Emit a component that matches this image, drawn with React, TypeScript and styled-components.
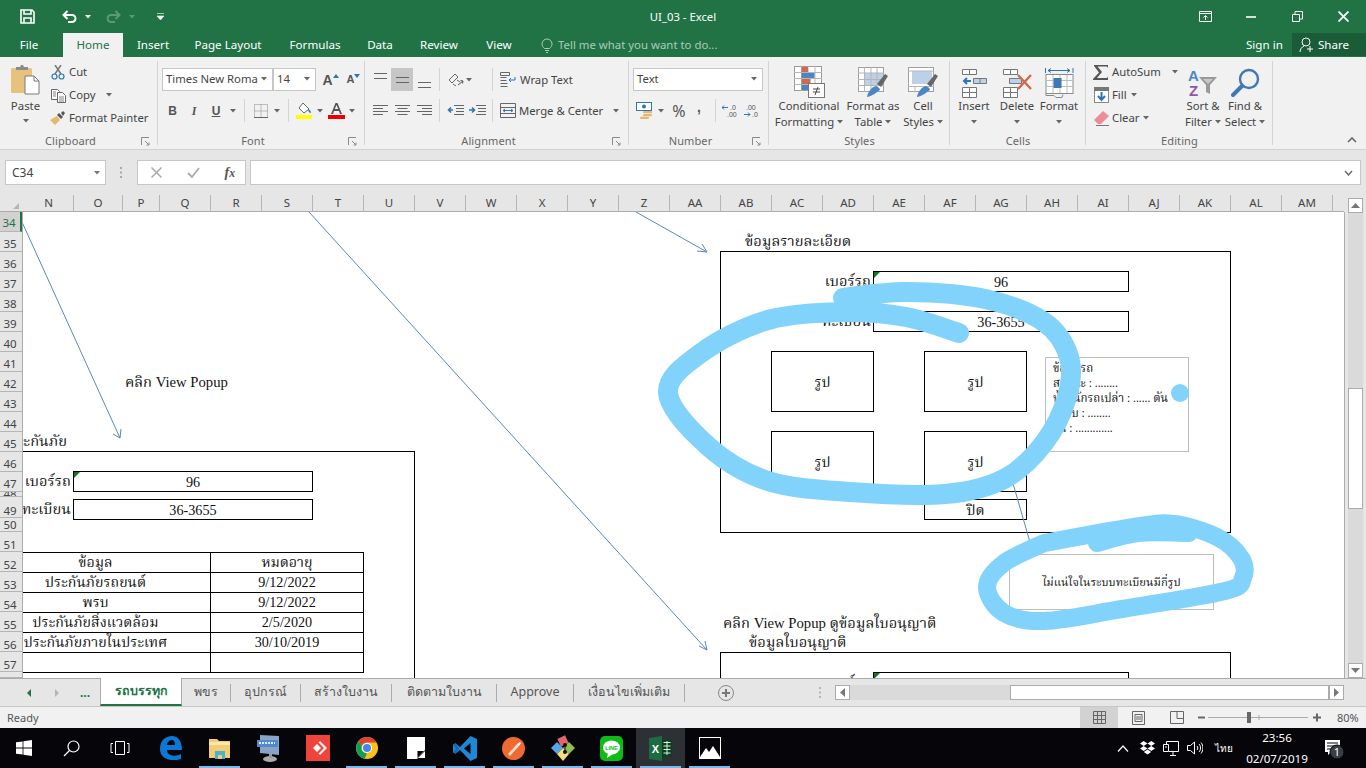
import React from "react";
import styled, { createGlobalStyle } from "styled-components";

const UI = '"Noto Sans", "Open Sans", Arial, sans-serif';
const SERIF = '"Liberation Serif", "Noto Serif Thai", "Noto Sans Thai", "Noto Sans", "DejaVu Serif", serif';

const Global = createGlobalStyle`
  html, body { margin: 0; padding: 0; width: 1366px; height: 768px; overflow: hidden; background: #fff; }
  #root { width: 1366px; height: 768px; }
  * { box-sizing: border-box; }
  svg { display: block; flex: none; }
`;

const Window = styled.div`
  width: 1366px; height: 768px; display: flex; flex-direction: column; overflow: hidden;
  font: 11.3px/16px ${UI}; color: #444;
`;

/* ---------- title bar ---------- */
const TitleBar = styled.div`
  height: 33px; background: #217346; color: #fff; display: grid;
  grid-template-columns: 1fr auto 1fr; align-items: center; flex: none;
`;
const Qat = styled.div`display: flex; align-items: center; padding-left: 19px;`;
const QatSlot = styled.div<{ $w: number }>`width: ${p => p.$w}px; display: flex; justify-content: center;`;
const TitleText = styled.div`font-size: 11.3px; color: #fff;`;
const WinButtons = styled.div`display: flex; justify-content: flex-end; align-items: center;`;
const WinButton = styled.div`width: 46px; display: flex; justify-content: center;`;

/* ---------- tab row ---------- */
const TabRow = styled.div`height: 24px; background: #217346; display: flex; align-items: stretch; color: #fff; flex: none;`;
const MenuTab = styled.div<{ $w: number; $active?: boolean; $pr?: number }>`
  width: ${p => p.$w}px; display: flex; justify-content: center; align-items: center; font-size: 11.6px;
  padding-right: ${p => p.$pr ?? 0}px;
  background: ${p => (p.$active ? "#f1f1f1" : "transparent")};
  color: ${p => (p.$active ? "#217346" : "#fff")};
`;
const TellMe = styled.div`
  display: flex; align-items: center; gap: 5px; margin-left: 18px; color: #a8cdb8; font-size: 11.4px; flex: 1;
`;
const SignIn = styled.div`width: 46px; text-align: left; font-size: 11.6px; line-height: 24px;`;
const Share = styled.div`
  width: 74px; height: 23px; background: #1a5c38; display: flex; align-items: center; gap: 3px;
  padding-left: 7px; font-size: 11.6px;
`;

/* ---------- ribbon ---------- */
const Ribbon = styled.div`
  height: 93px; background: #f1f1f1; border-bottom: 1px solid #d2d2d2; display: flex; flex: none;
`;
const Group = styled.div<{ $w: number }>`
  width: ${p => p.$w}px; height: 92px; padding-top: 4px; flex: none;
`;
const GroupInner = styled.div`
  height: 84px; border-right: 1px solid #d4d4d4; display: flex; flex-direction: column;
`;
const GroupBody = styled.div<{ $pl?: number; $pt?: number }>`
  height: 72px; flex: none; display: flex;
  padding-left: ${p => p.$pl ?? 0}px; padding-top: ${p => p.$pt ?? 0}px;
`;
const GroupFoot = styled.div<{ $launch?: boolean }>`
  height: 16px; flex: none; display: grid; align-items: center; margin-right: -1px;
  grid-template-columns: ${p => (p.$launch ? "1fr auto 1fr 17px" : "1fr auto 1fr")};
  color: #666; font-size: 11px; letter-spacing: .1px;
`;
const PasteCol = styled.div`
  width: 33px; margin-left: 9px; margin-right: 8px; display: flex; flex-direction: column; align-items: center;
  padding-top: 3px; font-size: 11.4px;
`;
const PasteLabel = styled.div`margin-top: 3px;`;
const PasteCaret = styled.div`margin-top: 5px;`;
const Stack = styled.div<{ $w?: number }>`display: flex; flex-direction: column; ${p => (p.$w ? `width:${p.$w}px;` : "")}`;
const StackRow = styled.div`height: 23px; display: flex; align-items: center; gap: 2px; white-space: nowrap; padding-bottom: 1px;`;
const StackIcon = styled.div`width: 16px; display: flex; justify-content: center; margin-right: 1px;`;
const CaretGap = styled.div<{ $ml: number }>`margin-left: ${p => p.$ml}px; display: flex;`;
const Col = styled.div<{ $w?: number }>`
  display: flex; flex-direction: column; gap: 8px; ${p => (p.$w ? `width:${p.$w}px;` : "")}
`;
const Row = styled.div<{ $gap?: number; $ml?: number }>`
  height: 23px; display: flex; align-items: center; gap: ${p => p.$gap ?? 0}px; white-space: nowrap; margin-left: ${p => p.$ml ?? 0}px;
`;
const Combo = styled.div<{ $w: number }>`
  width: ${p => p.$w}px; height: 23px; background: #fff; border: 1px solid #c6c6c6; display: flex; align-items: center;
  justify-content: space-between; padding: 0 5px 1px 3px; color: #444; white-space: nowrap; overflow: hidden; flex: none;
`;
const IconBtn = styled.div<{ $w: number; $on?: boolean }>`
  width: ${p => p.$w}px; height: 23px; display: flex; align-items: center; justify-content: center; flex: none;
  background: ${p => (p.$on ? "#c6c6c6" : "transparent")};
`;
const GlyphBtn = styled(IconBtn)<{ $size?: number; $serif?: boolean; $line?: boolean; $bump?: number }>`
  font: ${p => (p.$serif ? "italic 700" : "700")} ${p => p.$size ?? 12}px/16px ${p => (p.$serif ? '"Liberation Serif"' : '"Liberation Sans"')}, serif;
  color: #555; ${p => (p.$line ? "text-decoration: underline;" : "")}
  padding-bottom: ${p => p.$bump ?? 0}px;
`;
const PctBtn = styled(IconBtn)`font: 400 16px/16px ${UI}; color: #555;`;
const VSep = styled.div<{ $l?: number; $r?: number }>`
  width: 1px; height: 23px; background: #d4d4d4; flex: none;
  margin: 0 ${p => p.$r ?? 5}px 0 ${p => p.$l ?? 5}px;
`;
const VSepTall = styled.div<{ $ml: number; $mr: number }>`
  width: 1px; height: 54px; margin: 0 ${p => p.$mr}px 0 ${p => p.$ml}px; display: flex; flex-direction: column; justify-content: space-between; flex: none;
  &::before, &::after { content: ""; display: block; height: 23px; background: #d4d4d4; }
`;
const Large = styled.div<{ $w: number }>`
  width: ${p => p.$w}px; display: flex; flex-direction: column; align-items: center; white-space: nowrap; flex: none;
`;
const LargeIcon = styled.div`height: 37px; display: flex; align-items: flex-end; justify-content: center;`;
const LargeText = styled.div`height: 16px; display: flex; align-items: center; gap: 3px; line-height: 16px;`;
const FontAGlyph = styled.span<{ $s: number }>`font: 700 ${p => p.$s}px/1 "Liberation Sans", sans-serif; color: #555;`;
const Spacer = styled.div`flex: 1; display: flex; justify-content: flex-end; align-items: flex-end; padding: 0 9px 6px 0;`;

/* ---------- formula bar ---------- */
const FormulaBar = styled.div`
  height: 45px; background: #e6e6e6; display: flex; align-items: flex-start; padding: 10px 5px 0 5px; flex: none;
`;
const NameBox = styled.div`
  width: 101px; height: 25px; background: #fff; border: 1px solid #c6c6c6; display: flex; align-items: center;
  justify-content: space-between; padding: 0 5px 0 6px; font-size: 12px;
`;
const Grip = styled.div`width: 31px; height: 25px; display: flex; align-items: center; justify-content: center;`;
const FxBox = styled.div`
  width: 109px; height: 25px; background: #fff; border: 1px solid #c6c6c6; display: flex; align-items: center;
  justify-content: space-between; padding: 0 10px 0 13px; margin-right: 4px;
`;
const FxText = styled.span`font: italic 700 14px/1 "Liberation Serif", serif; color: #555;`;
const FormulaInput = styled.div`
  flex: 1; height: 25px; background: #fff; border: 1px solid #c6c6c6; display: flex; align-items: center; justify-content: flex-end; padding-right: 7px;
`;

/* ---------- column header ---------- */
const ColRow = styled.div`height: 17px; background: #e6e6e6; display: flex; flex: none;`;
const Corner = styled.div`width: 24px; display: flex; align-items: flex-end; justify-content: flex-end; padding: 0 5px 2px 0; border-bottom: 1px solid #ababab; flex: none;`;
const ColCell = styled.div<{ $w: number }>`
  width: ${p => p.$w}px; height: 17px; border-right: 1px solid #b5b5b5; border-bottom: 1px solid #ababab;
  font: 11.5px/16px ${UI}; color: #444; text-align: center; flex: none;
`;
const ColRest = styled.div`width: 11px; height: 17px; border-bottom: 1px solid #ababab; flex: none;`;

/* ---------- sheet ---------- */
const SheetArea = styled.div`height: 466px; display: flex; flex: none; background: #e6e6e6;`;
const RowHeaders = styled.div`width: 23px; flex: none; display: flex; flex-direction: column; border-right: 1px solid #ababab;`;
const RowHead = styled.div<{ $h: number; $lh: number; $active?: boolean }>`
  height: ${p => p.$h}px; flex: none; overflow: hidden; text-align: center; border-bottom: 1px solid #b5b5b5;
  font: 11.5px/${p => p.$lh}px ${UI}; padding-right: 2px;
  background: ${p => (p.$active ? "#d2d2d2" : "#e6e6e6")};
  color: ${p => (p.$active ? "#217346" : "#444")};
  border-right: ${p => (p.$active ? "2px solid #217346" : "0")};
`;
const Canvas = styled.div`
  width: 1321px; height: 466px; position: relative; overflow: hidden; background: #fff; flex: none;
  font: 14.7px/20px ${SERIF}; color: #111; box-shadow: 1px 0 0 #ababab;
`;
const Label = styled.div<{ $x: number; $y: number; $w?: number; $right?: boolean }>`
  position: absolute; left: ${p => p.$x - 23}px; top: ${p => p.$y - 212}px; white-space: nowrap; height: 20px;
  ${p => (p.$w ? `width:${p.$w}px;` : "")} ${p => (p.$right ? "text-align:right;" : "")}
`;
const Boxed = styled.div<{ $x: number; $y: number; $w: number; $h: number; $gray?: boolean; $flag?: boolean }>`
  position: absolute; left: ${p => p.$x - 23}px; top: ${p => p.$y - 212}px; width: ${p => p.$w}px; height: ${p => p.$h}px;
  border: 1px solid ${p => (p.$gray ? "#bdbdbd" : "#000")}; background: ${p => (p.$gray ? "#fff" : "transparent")};
  display: flex; align-items: center; justify-content: center; line-height: 18px; font-size: 14.2px;
  &::before { content: ""; display: ${p => (p.$flag ? "block" : "none")}; position: absolute; left: 0; top: 0;
    border-style: solid; border-width: 6px 6px 0 0; border-color: #0b7a1a transparent transparent transparent; }
`;
const InfoText = styled.div`
  position: absolute; left: 7px; top: 3px; font-size: 11.5px; line-height: 15px; white-space: nowrap;
`;
const NoteText = styled.div`font-size: 11.3px; line-height: 14px; white-space: nowrap;`;
const SheetTable = styled.div`
  position: absolute; left: -43px; top: 340px; display: grid; grid-template-columns: 230px 153px; grid-auto-rows: 20px;
  border-left: 1px solid #000; border-top: 1px solid #000; width: 384px; font-size: 14.2px;
`;
const TCell = styled.div`
  border-right: 1px solid #000; border-bottom: 1px solid #000; display: flex; align-items: center; justify-content: center; line-height: 19px;
`;
const Overlay = styled.svg`position: absolute; left: 0; top: 0; pointer-events: none;`;
const VScroll = styled.div`
  flex: 1; padding: 0 3px 0 4px; margin-top: -14px; height: 480px; display: flex; flex-direction: column;
`;
const Track = styled.div`flex: 1; background: #dadada; display: flex; flex-direction: column; width: 15px;`;
const ScrollBtn = styled.div`
  height: 15px; width: 15px; background: #fff; border: 1px solid #ababab; display: flex; align-items: center; justify-content: center; flex: none;
`;
const VThumb = styled.div`width: 15px; height: 121px; background: #fff; border: 1px solid #ababab; margin-top: 175px;`;

/* ---------- sheet tabs ---------- */
const TabsBar = styled.div`
  height: 29px; background: #e6e6e6; border-top: 1px solid #ababab; border-bottom: 1px solid #c6c6c6; display: flex; align-items: center; flex: none;
`;
const Nav = styled.div<{ $w: number }>`width: ${p => p.$w}px; display: flex; justify-content: center; align-items: center; color: #217346; font-weight: 700; font-size: 12px; flex: none;`;
const SheetTab = styled.div<{ $w: number; $active?: boolean }>`
  width: ${p => p.$w}px; height: 28px; margin-top: -1px; display: flex; align-items: center; justify-content: center; flex: none;
  font: ${p => (p.$active ? 700 : 400)} 12.5px/16px ${UI};
  color: ${p => (p.$active ? "#217346" : "#555")};
  background: ${p => (p.$active ? "#fff" : "transparent")};
  border-left: ${p => (p.$active ? "1px solid #ababab" : "0")};
  border-right: ${p => (p.$active ? "1px solid #ababab" : "0")};
  border-bottom: ${p => (p.$active ? "2px solid #217346" : "0")};
`;
const TabDiv = styled.div`width: 1px; height: 18px; background: #ababab; flex: none;`;
const AddTab = styled.div`margin-left: 33px; margin-right: 85px; display: flex;`;
const HScroll = styled.div`display: flex; align-items: center; height: 15px; margin-left: 13px; width: 510px;`;
const HTrack = styled.div`width: 160px; height: 15px; background: #dadada;`;
const HThumb = styled.div`width: 319px; height: 15px; background: #fff; border: 1px solid #ababab;`;

/* ---------- status bar ---------- */
const StatusBar = styled.div`
  height: 21px; background: #f1f1f1; display: flex; align-items: center; padding-left: 7px; flex: none; font-size: 11px; color: #555;
`;
const StatusGrow = styled.div`flex: 1;`;
const ViewBtn = styled.div<{ $on?: boolean }>`
  width: 38px; height: 21px; display: flex; align-items: center; justify-content: center; margin-right: 1px;
  background: ${p => (p.$on ? "#d2d2d2" : "transparent")};
`;
const Zoom = styled.div`width: 130px; display: flex; align-items: center; margin-left: 1px;`;
const ZoomPct = styled.div`width: 29px; margin-left: 9px; font-size: 11px;`;

/* ---------- taskbar ---------- */
const Taskbar = styled.div`height: 40px; background: #05050a; display: flex; align-items: stretch; flex: none; color: #fff;`;
const TaskItem = styled.div<{ $on?: boolean; $run?: boolean; $w?: number }>`
  width: ${p => p.$w ?? 49}px; flex: none; display: flex; align-items: center; justify-content: center; position: relative;
  background: ${p => (p.$on ? "#2d3034" : "transparent")};
  &::after { content: ""; position: absolute; left: 4px; right: 4px; bottom: 0; height: 2px; background: #76b9ed;
    display: ${p => (p.$run || p.$on ? "block" : "none")}; }
`;
const TaskGrow = styled.div`flex: 1;`;
const Tray = styled.div<{ $w: number; $pr?: number }>`
  width: ${p => p.$w}px; flex: none; display: flex; align-items: center; justify-content: center; padding-right: ${p => p.$pr ?? 0}px;
`;
const LangText = styled.div`font: 10px/1 "Noto Sans", sans-serif;`;
const Clock = styled.div`width: 72px; text-align: center; font-size: 11.6px; line-height: 21px; flex: none; display: flex; flex-direction: column; justify-content: center;`;

/* ---------- icons ---------- */
const Caret = ({ c = "#666" }: { c?: string }) => (
  <svg width="6" height="4" viewBox="0 0 6 4"><path d="M0 0h6L3 3.500z" fill={c} /></svg>
);
const Launch = () => (
  <svg width="9" height="9" viewBox="0 0 9 9" fill="none" stroke="#8a8a8a"><path d="M.5 8V.5H8M4 4l4 4M8 5.500V8H5.500" /></svg>
);
const PasteIcon = () => (
  <svg width="31" height="31" viewBox="0 0 31 31">
    <rect x="1" y="4" width="21" height="25" rx="1.500" fill="#e7c27e" />
    <path d="M6 6V3h4l1-2h2l1 2h4v3z" fill="#8b8b8b" />
    <path d="M15 12h9l5 5v13H15z" fill="#fff" stroke="#7a7a7a" /><path d="M24 12v5h5" fill="none" stroke="#7a7a7a" />
  </svg>
);
const CutIcon = () => (
  <svg width="15" height="15" viewBox="0 0 15 15" fill="none">
    <path d="M4 9L10 0M10 9L4 0" stroke="#777" strokeWidth="1.500" />
    <circle cx="3.500" cy="11.500" r="2.500" stroke="#2e75b6" strokeWidth="1.200" /><circle cx="10.500" cy="11.500" r="2.500" stroke="#2e75b6" strokeWidth="1.200" />
  </svg>
);
const CopyIcon = () => (
  <svg width="15" height="15" viewBox="0 0 15 15" fill="#fff" stroke="#666">
    <path d="M.5 1.500h6l2 2v8h-8z" /><path d="M6.500 4.500h5l3 3v7h-8z" />
    <path d="M8 9h5M8 11h5M8 13h5M2 4h3M2 6h3M2 8h3" strokeWidth=".8" />
  </svg>
);
const BrushIcon = () => (
  <svg width="16" height="14" viewBox="0 0 16 14">
    <path d="M9 2l4 4-2 2-4-4z" fill="#555" /><path d="M11 2l2-2 2 2-2 3z" fill="#555" />
    <path d="M7 5l3 4-5 5-5-5z" fill="#e5b76f" />
  </svg>
);
const Up = () => <svg width="6" height="4" viewBox="0 0 6 4" style={{ marginBottom: 8 }}><path d="M0 4h6L3 0z" fill="#2e75b6" /></svg>;
const Dn = () => <svg width="6" height="4" viewBox="0 0 6 4" style={{ marginBottom: 8 }}><path d="M0 0h6L3 4z" fill="#2e75b6" /></svg>;
const BorderIcon = () => (
  <svg width="14" height="14" viewBox="0 0 14 14" fill="none" stroke="#888" strokeDasharray="1 1"><path d="M.5.5h13v13H.5zM7 .5v13M.5 7h13" /><path d="M0 13.500h14" stroke="#666" strokeDasharray="none" /></svg>
);
const FillIcon = () => (
  <svg width="17" height="17" viewBox="0 0 17 17">
    <path d="M7 1l6 6-5 4-5-5z" fill="#fff" stroke="#666" /><path d="M12 7c2 1 3 2 3 4-1 0-3-1-3-4z" fill="#2e75b6" />
    <rect x="0" y="13" width="16" height="4" fill="#ffff00" />
  </svg>
);
const ColorA = () => (
  <svg width="17" height="16" viewBox="0 0 17 16">
    <path d="M3 11L7.500 0h2L14 11h-2l-1-3H6l-1 3zM6.800 6h3.400L8.500 2z" fill="#555" /><rect y="12" width="17" height="4" fill="#e00" />
  </svg>
);
const linePaths = {
  t: "M1 1.500h13M1 6.500h13",
  m: "M1 5.500h13M1 10.500h13",
  b: "M1 10.500h13M1 15.500h13",
  l: "M0 .5h15M0 3.500h10M0 6.500h15M0 9.500h10",
  c: "M0 .5h15M2.500 3.500h10M0 6.500h15M2.500 9.500h10",
  r: "M0 .5h15M5 3.500h10M0 6.500h15M5 9.500h10",
};
const Lines = ({ kind }: { kind: keyof typeof linePaths }) => (
  <svg width="15" height={"tmb".includes(kind) ? 16 : 11} viewBox={`0 0 15 ${"tmb".includes(kind) ? 16 : 11}`} stroke="#666"><path d={linePaths[kind]} /></svg>
);
const Orient = () => (
  <svg width="17" height="15" viewBox="0 0 17 15" fill="none" stroke="#666">
    <path d="M1 8l6-6 3 3-6 6zM5 12l3 2M9 8l3 2" /><path d="M10 13l5-4M12.500 8.500l2.500.5-.5 2.500" stroke="#555" />
  </svg>
);
const Indent = ({ out }: { out?: boolean }) => (
  <svg width="17" height="11" viewBox="0 0 17 11">
    <path d="M7 .5h10M9 3.500h8M9 6.500h8M7 9.500h10" stroke="#666" fill="none" />
    <path d={out ? "M6 5H2M4 2.500L1.500 5 4 7.500" : "M0 5h5M3 2.500L5.500 5 3 7.500"} stroke="#2e75b6" strokeWidth="1.600" fill="none" />
  </svg>
);
const WrapIcon = () => (
  <svg width="17" height="15" viewBox="0 0 17 15" fill="none" stroke="#666">
    <path d="M.5.5h9v3h-9zM.5 5.500h6M.5 8.500h6M.5 11.500h7M.5 14.500h7" /><path d="M9 8h6V5M11 6l-2 2 2 2" stroke="#2e75b6" />
  </svg>
);
const MergeIcon = () => (
  <svg width="16" height="15" viewBox="0 0 16 15" fill="#fff" stroke="#666">
    <path d="M.5.5h15v14H.5zM.5 4.500h15M.5 10.500h15" fill="none" /><path d="M3 7.500h10M3 7.500l2-1.500M3 7.500l2 1.500M13 7.500l-2-1.500M13 7.500l-2 1.500" stroke="#2e75b6" fill="none" />
  </svg>
);
const CurrencyIcon = () => (
  <svg width="17" height="17" viewBox="0 0 17 17">
    <rect x=".5" y=".5" width="15" height="8" fill="#fff" stroke="#2e75b6" /><circle cx="8" cy="4.500" r="2" fill="#2e75b6" />
    <rect x="7" y="9" width="9" height="2.200" rx="1" fill="#e5b76f" /><rect x="7" y="12" width="9" height="2.200" rx="1" fill="#e5b76f" /><rect x="4" y="14.800" width="9" height="2.200" rx="1" fill="#e5b76f" />
  </svg>
);
const DecIcon = ({ inc }: { inc?: boolean }) => (
  <svg width="16" height="14" viewBox="0 0 16 14" fontFamily="Liberation Sans" fontSize="7" fill="#555">
    <text x={inc ? 3 : 8} y="6">{inc ? ".00" : ".0"}</text>
    <text x={inc ? 9 : 5} y="13">{inc ? ".0" : ".00"}</text>
    {inc
      ? <path d="M1 10.500h6M5 8.500l2 2-2 2" stroke="#2e75b6" fill="none" />
      : <path d="M0 3.500h6M2 1.500l-2 2 2 2" stroke="#2e75b6" fill="none" />}
  </svg>
);
const CondIcon = () => (
  <svg width="31" height="32" viewBox="0 0 31 32">
    <g fill="#fff" stroke="#9a9a9a"><rect x=".5" y=".5" width="27" height="24" /></g>
    <path d="M7.500 0v25M14 0v25M21 0v25M0 6.500h28M0 12.500h28M0 18.500h28" stroke="#b5b5b5" />
    <rect x="7.500" y="1" width="6.500" height="5" fill="#d2694a" /><rect x="7.500" y="7" width="13" height="5" fill="#4a86c4" />
    <rect x="7.500" y="13" width="9" height="5" fill="#d2694a" /><rect x="7.500" y="19" width="6.500" height="5" fill="#4a86c4" />
    <rect x="14.500" y="17.500" width="16" height="14" fill="#fff" stroke="#777" />
    <path d="M19 23h7M19 26h7M24 21l-3 8" stroke="#444" />
  </svg>
);
const TableIcon = ({ full }: { full?: boolean }) => (
  <svg width="31" height="31" viewBox="0 0 31 31">
    <rect x=".5" y=".5" width="25" height="24" fill="#fff" stroke="#a0a0a0" />
    {full
      ? <rect x="4" y="4" width="20" height="13" fill="#bdd0e8" />
      : <rect x="6" y="6" width="19" height="13" fill="#bdd0e8" />}
    {!full && <path d="M6.500 0v25M13 0v25M19 0v25M0 6h26M0 12.500h26M0 18.500h26" stroke="#b5b5b5" />}
    {full && <path d="M0 4h26M0 19.500h26M7 19v6M18 19v6" stroke="#b5b5b5" />}
    <path d="M19 17l8-10 3 2-7 11z" fill="#666" />
    <path d="M9 30c1-6 5-10 9-11 3 1 4 3 4 4-3 2-7 6-13 7z" fill="#4a86c4" />
  </svg>
);
const InsertIcon = () => (
  <svg width="27" height="29" viewBox="0 0 27 29" fill="#fff" stroke="#777">
    <path d="M1.500.5h14v5h-14zM8.500.5v5" />
    <path d="M12.500 9.500h13v5h-13zM19 9.500v5" fill="#bcd2e8" />
    <path d="M1.500 18.500h14v10h-14zM1.500 23.500h14M8.500 18.500v10" />
    <path d="M10 12H3M6 9l-3 3 3 3" fill="none" stroke="#2e75b6" strokeWidth="2" />
  </svg>
);
const DeleteIcon = () => (
  <svg width="31" height="29" viewBox="0 0 31 29" fill="#fff" stroke="#777">
    <path d="M1.500.5h14v5h-14zM8.500.5v5" />
    <path d="M7.500 9.500h12v5h-12z" fill="#bcd2e8" />
    <path d="M1.500 18.500h14v10h-14zM1.500 23.500h14M8.500 18.500v10" />
    <path d="M16 6l13 14M29 6L16 20" stroke="#d2694a" strokeWidth="2.400" fill="none" />
  </svg>
);
const FormatIcon = () => (
  <svg width="29" height="31" viewBox="0 0 29 31" fill="none">
    <path d="M.5 1v5M28 1v5M3 3.500h22M6 1.500L3 3.500l3 2M22 1.500l3 2-3 2" stroke="#2e75b6" />
    <rect x="1" y="7.500" width="27" height="19" fill="#fff" stroke="#8a8a8a" />
    <path d="M8 8v18M15 8v18M22 8v18M1 13.500h27M1 19.500h27" stroke="#bdbdbd" />
    <rect x="8.500" y="11" width="8" height="10" fill="#3f78b5" />
    <path d="M1 27v1.500h8l2 2h6l1-3" stroke="#8a8a8a" />
  </svg>
);
const Sigma = () => <svg width="16" height="15" viewBox="0 0 16 15"><path d="M1 0h14v3l-1-1.500H4.500L9 7l-5 6h10l1-1.500V15H0v-1l6-6.500L1 1z" fill="#555" /></svg>;
const FillDown = () => (
  <svg width="15" height="16" viewBox="0 0 15 16">
    <rect x=".5" y=".5" width="14" height="15" fill="#fff" stroke="#888" /><rect y="0" width="15" height="4" fill="#777" />
    <path d="M7.500 5v8M4 9l3.500 4L11 9" stroke="#2e75b6" strokeWidth="2" fill="none" />
  </svg>
);
const Eraser = () => (
  <svg width="15" height="15" viewBox="0 0 15 15"><path d="M9 0l6 5-8 8H4L0 9z" fill="#ec8d94" /><path d="M2 14.500h13" stroke="#777" /></svg>
);
const SortIcon = () => (
  <svg width="30" height="30" viewBox="0 0 30 30">
    <text x="0" y="13" fontFamily="Liberation Sans" fontWeight="700" fontSize="15" fill="#4a86c4">A</text>
    <text x="1" y="28" fontFamily="Liberation Sans" fontWeight="700" fontSize="15" fill="#8e56a8">Z</text>
    <path d="M11 9h18l-7 8v9l-4-2v-7z" fill="#999" /><path d="M15 11h10l-5 5z" fill="#c8c8c8" />
  </svg>
);
const FindIcon = () => (
  <svg width="29" height="30" viewBox="0 0 29 30" fill="none">
    <circle cx="18" cy="11" r="9" stroke="#3f78b5" strokeWidth="2.400" />
    <path d="M11 18L2 27" stroke="#3f78b5" strokeWidth="4" strokeLinecap="round" />
  </svg>
);
const Windows = () => (
  <svg width="16" height="16" viewBox="0 0 16 16" fill="#fff"><path d="M0 2.300L6.600 1.400V7.600H0zM7.400 1.300L16 0V7.600H7.400zM0 8.400H6.600V14.600L0 13.700zM7.400 8.400H16V16L7.400 14.800z" /></svg>
);
const SearchI = () => (
  <svg width="17" height="17" viewBox="0 0 17 17" fill="none" stroke="#fff" strokeWidth="1.200"><circle cx="10.500" cy="6.500" r="5.500" /><path d="M6.500 10.500L1 16" /></svg>
);
const TaskView = () => (
  <svg width="20" height="16" viewBox="0 0 20 16" fill="none" stroke="#fff"><path d="M5.500 1.500h9v13h-9zM3 3.500H1v9h2M17 3.500h2v9h-2" /></svg>
);
const Edge = () => (
  <svg width="22" height="24" viewBox="0 0 22 24">
    <path d="M0 13C0 5 5 0 12 0c6 0 10 5 10 14H7c0 6 8 7 14 4v5c-8 3-21 1-21-10zm7-4h8c0-3-1-5-3-5S7 6 7 9z" fill="#0a78d4" />
  </svg>
);
const Explorer = () => (
  <svg width="22" height="21" viewBox="0 0 22 21">
    <path d="M0 1h8l2 2h11v17H0z" fill="#f3cd72" /><path d="M0 4h21v3H0z" fill="#fbe7ac" />
    <rect x="6" y="13" width="10" height="8" fill="#49b0d8" /><rect x="9" y="17" width="4" height="4" fill="#f3cd72" />
  </svg>
);
const Monitor = () => (
  <svg width="23" height="28" viewBox="0 0 23 28">
    <path d="M3 1l19 1v19L3 19z" fill="#8aa4c8" /><rect x="0" y="6" width="21" height="7" fill="#4f8bd0" />
    <path d="M2 9h16" stroke="#dfeaf8" strokeWidth="2" strokeDasharray="2 1" />
    <ellipse cx="13" cy="25" rx="7" ry="3" fill="#aaa" /><rect x="12" y="20" width="3" height="4" fill="#999" />
  </svg>
);
const AnyDesk = () => (
  <svg width="24" height="26" viewBox="0 0 24 26"><rect width="24" height="26" fill="#ef443b" /><path d="M7 13l4-4 4 4-4 4z" fill="#fff" /><path d="M12.500 7.500l1.500-1.500 7 7-7 7-1.500-1.500 5.500-5.500z" fill="#fff" opacity=".95" /></svg>
);
const Chrome = () => (
  <svg width="22" height="22" viewBox="0 0 22 22">
    <circle cx="11" cy="11" r="11" fill="#fbc117" />
    <path d="M11 0a11 11 0 0 1 9.500 5.500H11a5.500 5.500 0 0 0-5 3L2.200 4.500A11 11 0 0 1 11 0z" fill="#db4437" />
    <path d="M2.200 4.500L6 8.500a5.500 5.500 0 0 0 5 8l-2.500 5.200A11 11 0 0 1 2.200 4.500z" fill="#0f9d58" />
    <circle cx="11" cy="11" r="5" fill="#fff" /><circle cx="11" cy="11" r="4" fill="#4285f4" />
  </svg>
);
const Notes = () => (
  <svg width="18" height="22" viewBox="0 0 18 22"><path d="M0 0h18v13l-8 9H0z" fill="#fff" /><path d="M11 21l7-7v7z" fill="#fff" /><path d="M10.500 14H17l-6.500 7z" fill="#05050a" /></svg>
);
const VsCode = () => (
  <svg width="24" height="25" viewBox="0 0 24 25">
    <path d="M17.500 0L24 3v19l-6.500 3L7 14l-4.500 3.800L0 16.300v-7.600L2.500 7.200 7 11z" fill="#1f88d6" />
    <path d="M17.500 7l-6.500 5.500 6.500 5.500z" fill="#05050a" /><path d="M0 8.700l2.500-1.500 3.500 5.300-3.500 5.300L0 16.300l3-3.800z" fill="#0e6cb5" />
  </svg>
);
const Postman = () => (
  <svg width="23" height="23" viewBox="0 0 23 23">
    <circle cx="11.500" cy="11.500" r="11.500" fill="#ee6a32" /><path d="M6 17l9-10 2 2-9 10z" fill="#ffe3d1" opacity=".95" /><path d="M15 7l3-2 1 1-2 3z" fill="#fff" />
  </svg>
);
const GitIcon = () => (
  <svg width="24" height="26" viewBox="0 0 24 26">
    <path d="M12 0l6 6-6 6-6-6z" fill="#e0676f" transform="rotate(20 12 6)" /><path d="M0 13l6-6 6 6-6 6z" fill="#5aa5e8" />
    <path d="M12 13l6-6 6 6-6 6z" fill="#8cc152" /><path d="M6 19l6-6 6 6-6 7z" fill="#f6dd7a" />
    <circle cx="14" cy="10" r="2" fill="#111" /><circle cx="14" cy="17" r="2" fill="#111" /><path d="M14 10v7" stroke="#111" />
  </svg>
);
const Line = () => (
  <svg width="23" height="25" viewBox="0 0 23 25">
    <rect width="23" height="25" rx="5" fill="#0cbb16" /><ellipse cx="11.500" cy="11.500" rx="8.500" ry="7" fill="#fff" />
    <path d="M8 17l-1 5 6-4z" fill="#fff" />
    <text x="11.500" y="13.500" textAnchor="middle" fontFamily="Liberation Sans" fontWeight="700" fontSize="5.500" fill="#0cbb16">LINE</text>
  </svg>
);
const ExcelIcon = () => (
  <svg width="23" height="25" viewBox="0 0 23 25">
    <path d="M0 2L13 0v25L0 23z" fill="#1d6b40" /><rect x="13" y="4" width="10" height="17" fill="#0d3d22" />
    <path d="M14.500 6.500h7M14.500 10h7M14.500 13.500h7M14.500 17h7M18 5v14" stroke="#d8efe0" fill="none" />
    <text x="6.500" y="16.500" textAnchor="middle" fontFamily="Liberation Sans" fontWeight="700" fontSize="11" fill="#fff">X</text>
  </svg>
);
const Photos = () => (
  <svg width="22" height="22" viewBox="0 0 22 22">
    <rect x=".5" y=".5" width="21" height="21" fill="#05050a" stroke="#fff" /><path d="M1 20l6-9 3 4 4-6 7 11v1H1z" fill="#fff" />
  </svg>
);

/* ---------- data ---------- */
const cols: [string, number][] = [["N", 50], ["O", 49], ["P", 37], ["Q", 51], ["R", 51], ["S", 51], ["T", 51], ["U", 51], ["V", 51], ["W", 51], ["X", 51], ["Y", 51], ["Z", 51], ["AA", 51], ["AB", 51], ["AC", 51], ["AD", 51], ["AE", 51], ["AF", 51], ["AG", 51], ["AH", 51], ["AI", 51], ["AJ", 51], ["AK", 51], ["AL", 51], ["AM", 51]];
const rows: [number, number, number][] = [
  [34, 20, 22],
  ...Array.from({ length: 13 }, (_, i) => [35 + i, 20, 24] as [number, number, number]),
  [48, 5, 3], [49, 21, 28], [50, 14, 14], [51, 20, 26], [52, 20, 26], [53, 20, 26], [54, 20, 26], [55, 20, 26], [56, 20, 26], [57, 20, 26], [58, 6, 26],
];
const table = [
  ["ข้อมูล", "หมดอายุ"],
  ["ประกันภัยรถยนต์", "9/12/2022"],
  ["พรบ", "9/12/2022"],
  ["ประกันภัยสิ่งแวดล้อม", "2/5/2020"],
  ["ประกันภัยภายในประเทศ", "30/10/2019"],
  ["", ""],
];
const sheetTabs: [string, number][] = [["พขร", 49], ["อุปกรณ์", 70], ["สร้างใบงาน", 91], ["ติดตามใบงาน", 105], ["Approve", 77], ["เงื่อนไขเพิ่มเติม", 111]];

type P = [number, number];
const smooth = (pts: P[]) => {
  let d = `M${pts[0][0]} ${pts[0][1]}`;
  for (let i = 0; i < pts.length - 1; i++) {
    const p0 = pts[Math.max(0, i - 1)], p1 = pts[i], p2 = pts[i + 1], p3 = pts[Math.min(pts.length - 1, i + 2)];
    d += `C${p1[0] + (p2[0] - p0[0]) / 6} ${p1[1] + (p2[1] - p0[1]) / 6} ${p2[0] - (p3[0] - p1[0]) / 6} ${p2[1] - (p3[1] - p1[1]) / 6} ${p2[0]} ${p2[1]}`;
  }
  return d;
};
const loopA: P[] = [[843, 298], [906, 292], [985, 299], [1044, 322], [1069, 357], [1067, 397], [1044, 443], [1004, 479], [945, 494], [850, 492], [768, 481], [709, 447], [668, 393], [701, 353], [768, 320], [847, 312], [906, 317], [959, 333]];
const loopB: P[] = [[1044, 543], [1134, 527], [1174, 524], [1217, 537], [1241, 558], [1243, 578], [1225, 591], [1122, 609], [1044, 621], [1004, 613], [987, 587], [1004, 563], [1044, 543]];
const loopC: P[] = [[1097, 543], [1138, 533], [1189, 533]];

const App = () => (
  <Window>
    <Global />
    <TitleBar>
      <Qat>
        <QatSlot $w={16}>
          <svg width="15" height="15" viewBox="0 0 15 15" fill="none" stroke="#fff" strokeWidth="1.600"><path d="M1 1h11l2 2v11H1z" /><path d="M4 1v4h7V1M4 14V9h7v5" /></svg>
        </QatSlot>
        <QatSlot $w={27} />
        <QatSlot $w={14}>
          <svg width="15" height="13" viewBox="0 0 15 13" fill="none" stroke="#fff" strokeWidth="2"><path d="M2 5h8a3.500 3.500 0 0 1 0 7H6M5.500 1L1.500 5l4 4" /></svg>
        </QatSlot>
        <QatSlot $w={24}><Caret c="#fff" /></QatSlot>
        <QatSlot $w={6} />
        <QatSlot $w={14}>
          <svg width="15" height="13" viewBox="0 0 15 13" fill="none" stroke="#5b9a78" strokeWidth="2"><path d="M13 5H5a3.500 3.500 0 0 0 0 7h4M9.500 1l4 4-4 4" /></svg>
        </QatSlot>
        <QatSlot $w={24}><Caret c="#5b9a78" /></QatSlot>
        <QatSlot $w={32}>
          <svg width="7" height="7" viewBox="0 0 7 7"><path d="M0 .5h7M0 3h7L3.500 7z" fill="#fff" stroke="#fff" strokeWidth=".6" /></svg>
        </QatSlot>
      </Qat>
      <TitleText>UI_03 - Excel</TitleText>
      <WinButtons>
        <WinButton>
          <svg width="13" height="11" viewBox="0 0 13 11" fill="none" stroke="#fff"><path d="M.5.5h12v10H.5zM.5 2.500h12M6.500 9V5M4.500 6.500l2-2 2 2" /></svg>
        </WinButton>
        <WinButton><svg width="10" height="2" viewBox="0 0 10 2"><path d="M0 1h10" stroke="#fff" strokeWidth="1.600" /></svg></WinButton>
        <WinButton><svg width="11" height="11" viewBox="0 0 11 11" fill="none" stroke="#fff"><path d="M.5 3.500h7v7h-7zM3 3V.5h7.500V8H8" /></svg></WinButton>
        <WinButton><svg width="11" height="11" viewBox="0 0 11 11" stroke="#fff" strokeWidth="1.800"><path d="M.5.5l10 10M10.500.5l-10 10" /></svg></WinButton>
      </WinButtons>
    </TitleBar>

    <TabRow>
      <MenuTab $w={63} $pr={5}>File</MenuTab>
      <MenuTab $w={60} $active>Home</MenuTab>
      <MenuTab $w={60}>Insert</MenuTab>
      <MenuTab $w={90}>Page Layout</MenuTab>
      <MenuTab $w={84}>Formulas</MenuTab>
      <MenuTab $w={46}>Data</MenuTab>
      <MenuTab $w={72}>Review</MenuTab>
      <MenuTab $w={48}>View</MenuTab>
      <TellMe>
        <svg width="12" height="15" viewBox="0 0 12 15" fill="none" stroke="#a8cdb8"><path d="M3.500 10.500C2 9 1 8 1 6a5 5 0 0 1 10 0c0 2-1 3-2.500 4.500zM4 12.500h4M5 14.500h2" /></svg>
        Tell me what you want to do...
      </TellMe>
      <SignIn>Sign in</SignIn>
      <Share>
        <svg width="16" height="16" viewBox="0 0 16 16" fill="none" stroke="#fff"><circle cx="7" cy="5" r="4" /><path d="M1 15c0-3 2-5 4-6M11 9v6M8 12h6" /></svg>
        Share
      </Share>
    </TabRow>

    <Ribbon>
      <Group $w={158}>
        <GroupInner>
          <GroupBody>
            <PasteCol>
              <PasteIcon />
              <PasteLabel>Paste</PasteLabel>
              <PasteCaret><Caret /></PasteCaret>
            </PasteCol>
            <Stack>
              <StackRow><StackIcon><CutIcon /></StackIcon>Cut</StackRow>
              <StackRow><StackIcon><CopyIcon /></StackIcon>Copy<CaretGap $ml={9}><Caret /></CaretGap></StackRow>
              <StackRow><StackIcon><BrushIcon /></StackIcon>Format Painter</StackRow>
            </Stack>
          </GroupBody>
          <GroupFoot $launch><span /><span>Clipboard</span><span /><Launch /></GroupFoot>
        </GroupInner>
      </Group>

      <Group $w={207}>
        <GroupInner>
          <GroupBody $pl={4} $pt={7}>
            <Col>
              <Row>
                <Combo $w={111}>Times New Roma<Caret /></Combo>
                <Combo $w={43}>14<Caret /></Combo>
                <IconBtn $w={4} />
                <IconBtn $w={21}><FontAGlyph $s={14}>A</FontAGlyph><Up /></IconBtn>
                <IconBtn $w={4} />
                <IconBtn $w={17}><FontAGlyph $s={11}>A</FontAGlyph><Dn /></IconBtn>
              </Row>
              <Row>
                <GlyphBtn $w={21}>B</GlyphBtn>
                <GlyphBtn $w={22} $serif>I</GlyphBtn>
                <GlyphBtn $w={22} $line>U</GlyphBtn>
                <IconBtn $w={12}><Caret /></IconBtn>
                <VSep />
                <IconBtn $w={21}><BorderIcon /></IconBtn>
                <IconBtn $w={12}><Caret /></IconBtn>
                <VSep />
                <IconBtn $w={20}><FillIcon /></IconBtn>
                <IconBtn $w={12}><Caret /></IconBtn>
                <IconBtn $w={20}><ColorA /></IconBtn>
                <IconBtn $w={12}><Caret /></IconBtn>
              </Row>
            </Col>
          </GroupBody>
          <GroupFoot $launch><span /><span>Font</span><span /><Launch /></GroupFoot>
        </GroupInner>
      </Group>

      <Group $w={264}>
        <GroupInner>
          <GroupBody $pl={4} $pt={7}>
            <Col $w={66}>
              <Row>
                <IconBtn $w={22}><Lines kind="t" /></IconBtn>
                <IconBtn $w={22} $on><Lines kind="m" /></IconBtn>
                <IconBtn $w={22}><Lines kind="b" /></IconBtn>
              </Row>
              <Row>
                <IconBtn $w={22}><Lines kind="l" /></IconBtn>
                <IconBtn $w={22}><Lines kind="c" /></IconBtn>
                <IconBtn $w={22}><Lines kind="r" /></IconBtn>
              </Row>
            </Col>
            <VSepTall $ml={4} $mr={5} />
            <Col $w={47}>
              <Row>
                <IconBtn $w={2} />
                <IconBtn $w={18}><Orient /></IconBtn>
                <IconBtn $w={8}><Caret /></IconBtn>
              </Row>
              <Row $gap={5} $ml={2}><Indent out /><Indent /></Row>
            </Col>
            <VSepTall $ml={0} $mr={7} />
            <Col>
              <Row $gap={3}><WrapIcon />Wrap Text</Row>
              <Row $gap={3}><MergeIcon />Merge &amp; Center<CaretGap $ml={7}><Caret /></CaretGap></Row>
            </Col>
          </GroupBody>
          <GroupFoot $launch><span /><span>Alignment</span><span /><Launch /></GroupFoot>
        </GroupInner>
      </Group>

      <Group $w={140}>
        <GroupInner>
          <GroupBody $pl={4} $pt={7}>
            <Col>
              <Combo $w={130}>Text<Caret /></Combo>
              <Row>
                <IconBtn $w={22}><CurrencyIcon /></IconBtn>
                <IconBtn $w={12}><Caret /></IconBtn>
                <PctBtn $w={24}>%</PctBtn>
                <GlyphBtn $w={16} $size={14} $bump={7}>,</GlyphBtn>
                <VSep $l={8} $r={3} />
                <IconBtn $w={22}><DecIcon /></IconBtn>
                <IconBtn $w={20}><DecIcon inc /></IconBtn>
              </Row>
            </Col>
          </GroupBody>
          <GroupFoot $launch><span /><span>Number</span><span /><Launch /></GroupFoot>
        </GroupInner>
      </Group>

      <Group $w={181}>
        <GroupInner>
          <GroupBody $pl={2}>
            <Large $w={76}>
              <LargeIcon><CondIcon /></LargeIcon>
              <LargeText>Conditional</LargeText>
              <LargeText>Formatting <Caret /></LargeText>
            </Large>
            <Large $w={52}>
              <LargeIcon><TableIcon /></LargeIcon>
              <LargeText>Format as</LargeText>
              <LargeText>Table <Caret /></LargeText>
            </Large>
            <Large $w={48}>
              <LargeIcon><TableIcon full /></LargeIcon>
              <LargeText>Cell</LargeText>
              <LargeText>Styles <Caret /></LargeText>
            </Large>
          </GroupBody>
          <GroupFoot><span /><span>Styles</span><span /></GroupFoot>
        </GroupInner>
      </Group>

      <Group $w={136}>
        <GroupInner>
          <GroupBody $pl={2}>
            <Large $w={44}>
              <LargeIcon><InsertIcon /></LargeIcon>
              <LargeText>Insert</LargeText>
              <LargeText><Caret /></LargeText>
            </Large>
            <Large $w={42}>
              <LargeIcon><DeleteIcon /></LargeIcon>
              <LargeText>Delete</LargeText>
              <LargeText><Caret /></LargeText>
            </Large>
            <Large $w={42}>
              <LargeIcon><FormatIcon /></LargeIcon>
              <LargeText>Format</LargeText>
              <LargeText><Caret /></LargeText>
            </Large>
          </GroupBody>
          <GroupFoot><span /><span>Cells</span><span /></GroupFoot>
        </GroupInner>
      </Group>

      <Group $w={187}>
        <GroupInner>
          <GroupBody $pl={7}>
            <Stack $w={91}>
              <StackRow><StackIcon><Sigma /></StackIcon>AutoSum<CaretGap $ml={9}><Caret /></CaretGap></StackRow>
              <StackRow><StackIcon><FillDown /></StackIcon>Fill<CaretGap $ml={2}><Caret /></CaretGap></StackRow>
              <StackRow><StackIcon><Eraser /></StackIcon>Clear<CaretGap $ml={2}><Caret /></CaretGap></StackRow>
            </Stack>
            <Large $w={38}>
              <LargeIcon><SortIcon /></LargeIcon>
              <LargeText>Sort &amp;</LargeText>
              <LargeText>Filter <Caret /></LargeText>
            </Large>
            <Large $w={46}>
              <LargeIcon><FindIcon /></LargeIcon>
              <LargeText>Find &amp;</LargeText>
              <LargeText>Select <Caret /></LargeText>
            </Large>
          </GroupBody>
          <GroupFoot><span /><span>Editing</span><span /></GroupFoot>
        </GroupInner>
      </Group>
      <Spacer>
        <svg width="10" height="6" viewBox="0 0 10 6" fill="none" stroke="#666" strokeWidth="1.600"><path d="M1 5l4-4 4 4" /></svg>
      </Spacer>
    </Ribbon>

    <FormulaBar>
      <NameBox>C34<Caret c="#777" /></NameBox>
      <Grip>
        <svg width="3" height="11" viewBox="0 0 3 11" fill="#a8a8a8"><rect width="2" height="2" /><rect y="4.500" width="2" height="2" /><rect y="9" width="2" height="2" /></svg>
      </Grip>
      <FxBox>
        <svg width="11" height="11" viewBox="0 0 11 11" stroke="#aaa" strokeWidth="1.500"><path d="M.5.5l10 10M10.500.5l-10 10" /></svg>
        <svg width="13" height="11" viewBox="0 0 13 11" fill="none" stroke="#aaa" strokeWidth="1.800"><path d="M1 6l4 4 7-9" /></svg>
        <FxText>f<small>x</small></FxText>
      </FxBox>
      <FormulaInput>
        <svg width="9" height="6" viewBox="0 0 9 6" fill="none" stroke="#666" strokeWidth="1.400"><path d="M1 1l3.500 4L8 1" /></svg>
      </FormulaInput>
    </FormulaBar>

    <ColRow>
      <Corner><svg width="6" height="6" viewBox="0 0 6 6"><path d="M6 0v6H0z" fill="#b5b5b5" /></svg></Corner>
      {cols.map(([n, w]) => <ColCell key={n} $w={w}>{n}</ColCell>)}
      <ColRest />
    </ColRow>

    <SheetArea>
      <RowHeaders>
        {rows.map(([n, h, lh]) => <RowHead key={n} $h={h} $lh={lh} $active={n === 34}>{n}</RowHead>)}
      </RowHeaders>
      <Canvas>
        <Label $x={125} $y={372}>คลิก View Popup</Label>
        <Label $x={-60} $y={431} $w={127} $right>ข้อมูลประกันภัย</Label>
        <Boxed $x={-30} $y={451} $w={445} $h={240} />
        <Label $x={-20} $y={471} $w={91} $right>เบอร์รถ</Label>
        <Boxed $x={73} $y={471} $w={240} $h={21} $flag>96</Boxed>
        <Label $x={-20} $y={499} $w={91} $right>ทะเบียน</Label>
        <Boxed $x={73} $y={499} $w={240} $h={21}>36-3655</Boxed>
        <SheetTable>
          {table.flat().map((t, i) => <TCell key={i}>{t}</TCell>)}
        </SheetTable>

        <Label $x={745} $y={231}>ข้อมูลรายละเอียด</Label>
        <Boxed $x={720} $y={251} $w={511} $h={282} />
        <Label $x={760} $y={271} $w={111} $right>เบอร์รถ</Label>
        <Boxed $x={873} $y={271} $w={256} $h={21} $flag>96</Boxed>
        <Label $x={760} $y={311} $w={111} $right>ทะเบียน</Label>
        <Boxed $x={873} $y={311} $w={256} $h={21}>36-3655</Boxed>
        <Boxed $x={771} $y={351} $w={103} $h={61}>รูป</Boxed>
        <Boxed $x={924} $y={351} $w={103} $h={61}>รูป</Boxed>
        <Boxed $x={771} $y={431} $w={103} $h={61}>รูป</Boxed>
        <Boxed $x={924} $y={431} $w={103} $h={61}>รูป</Boxed>
        <Boxed $x={924} $y={499} $w={103} $h={21}>ปิด</Boxed>
        <Boxed $x={1045} $y={357} $w={144} $h={95} $gray>
          <InfoText>ข้อมูลรถ<br />สถานะ : ........<br />น้ำหนักรถเปล่า : ...... ตัน<br />ระบบ : ........<br />รุ่น : .............</InfoText>
        </Boxed>
        <Boxed $x={1009} $y={554} $w={205} $h={56} $gray>
          <NoteText>ไม่แน่ใจในระบบทะเบียนมีกี่รูป</NoteText>
        </Boxed>
        <Label $x={723} $y={613}>คลิก View Popup ดูข้อมูลใบอนุญาติ</Label>
        <Label $x={749} $y={632}>ข้อมูลใบอนุญาติ</Label>
        <Boxed $x={720} $y={652} $w={511} $h={60} />
        <Label $x={760} $y={672} $w={111} $right>เบอร์รถ</Label>
        <Boxed $x={873} $y={672} $w={256} $h={21} $flag>96</Boxed>

        <Overlay width="1321" height="466" viewBox="23 212 1321 466" fill="none">
          <g stroke="#5a86bd" strokeWidth="1">
            <path d="M22 222L120 438M113 434l7 4 1-9" />
            <path d="M309 212L707 650M699 646l8 4-2-9" />
            <path d="M636 212L707 252M697 251l10 1-5-8" />
            <path d="M1012 480L1034 556" />
          </g>
          <g stroke="#82d3fb" strokeWidth="20" strokeLinecap="round" strokeLinejoin="round">
            <path d={smooth(loopA)} />
          </g>
          <g stroke="#82d3fb" strokeWidth="18" strokeLinecap="round" strokeLinejoin="round">
            <path d={smooth(loopB)} />
            <path d={smooth(loopC)} />
          </g>
          <circle cx="1180" cy="393" r="9" fill="#82d3fb" />
        </Overlay>
      </Canvas>
      <VScroll>
        <ScrollBtn><svg width="9" height="5" viewBox="0 0 9 5"><path d="M0 5h9L4.500 0z" fill="#777" /></svg></ScrollBtn>
        <Track><VThumb /></Track>
        <ScrollBtn><svg width="9" height="5" viewBox="0 0 9 5"><path d="M0 0h9L4.500 5z" fill="#777" /></svg></ScrollBtn>
      </VScroll>
    </SheetArea>

    <TabsBar>
      <Nav $w={19} />
      <Nav $w={20}><svg width="4" height="8" viewBox="0 0 4 8"><path d="M4 0v8L0 4z" fill="#217346" /></svg></Nav>
      <Nav $w={36}><svg width="4" height="8" viewBox="0 0 4 8"><path d="M0 0v8l4-4z" fill="#b5b5b5" /></svg></Nav>
      <Nav $w={20}>...</Nav>
      <Nav $w={5} />
      <SheetTab $w={82} $active>รถบรรทุก</SheetTab>
      {sheetTabs.map(([t, w]) => (
        <React.Fragment key={t}>
          <SheetTab $w={w - 1}>{t}</SheetTab>
          <TabDiv />
        </React.Fragment>
      ))}
      <AddTab>
        <svg width="16" height="16" viewBox="0 0 16 16" fill="none" stroke="#888"><circle cx="8" cy="8" r="7.500" /><path d="M8 4v8M4 8h8" strokeWidth="2" stroke="#777" /></svg>
      </AddTab>
      <svg width="3" height="11" viewBox="0 0 3 11" fill="#b5b5b5"><rect width="2" height="2" /><rect y="4.500" width="2" height="2" /><rect y="9" width="2" height="2" /></svg>
      <HScroll>
        <ScrollBtn><svg width="5" height="9" viewBox="0 0 5 9"><path d="M5 0v9L0 4.500z" fill="#777" /></svg></ScrollBtn>
        <HTrack />
        <HThumb />
        <ScrollBtn><svg width="5" height="9" viewBox="0 0 5 9"><path d="M0 0v9l5-4.500z" fill="#777" /></svg></ScrollBtn>
      </HScroll>
    </TabsBar>

    <StatusBar>
      Ready
      <StatusGrow />
      <ViewBtn $on>
        <svg width="13" height="13" viewBox="0 0 13 13" fill="none" stroke="#666"><path d="M.5.5h12v12H.5zM4.500 0v13M8.500 0v13M0 4.500h13M0 8.500h13" /></svg>
      </ViewBtn>
      <ViewBtn>
        <svg width="13" height="14" viewBox="0 0 13 14" fill="none" stroke="#666"><path d="M.5.5h12v13H.5zM3 3.500h7v7H3zM4 6h5M4 8h5" /></svg>
      </ViewBtn>
      <ViewBtn>
        <svg width="14" height="13" viewBox="0 0 14 13" fill="none" stroke="#666"><path d="M.5.5h13v12H.5zM7 .5v7h6.500" /></svg>
      </ViewBtn>
      <Zoom>
        <svg width="130" height="13" viewBox="0 0 130 13">
          <path d="M0 6.500h7" stroke="#666" strokeWidth="2" />
          <path d="M10 6.500h100" stroke="#aaa" />
          <path d="M61 4v5" stroke="#aaa" />
          <rect x="49" y="1" width="4" height="11" fill="#666" />
          <path d="M115 6.500h8M119 2.500v8" stroke="#666" strokeWidth="2" />
        </svg>
      </Zoom>
      <ZoomPct>80%</ZoomPct>
    </StatusBar>

    <Taskbar>
      <TaskItem $w={48}><Windows /></TaskItem>
      <TaskItem $w={46}><SearchI /></TaskItem>
      <TaskItem $w={52}><TaskView /></TaskItem>
      <TaskItem><Edge /></TaskItem>
      <TaskItem $run><Explorer /></TaskItem>
      <TaskItem><Monitor /></TaskItem>
      <TaskItem><AnyDesk /></TaskItem>
      <TaskItem $run><Chrome /></TaskItem>
      <TaskItem $run><Notes /></TaskItem>
      <TaskItem $run><VsCode /></TaskItem>
      <TaskItem $run><Postman /></TaskItem>
      <TaskItem $run><GitIcon /></TaskItem>
      <TaskItem $run><Line /></TaskItem>
      <TaskItem $on><ExcelIcon /></TaskItem>
      <TaskItem $run $w={49}><Photos /></TaskItem>
      <TaskGrow />
      <Tray $w={24}>
        <svg width="12" height="7" viewBox="0 0 12 7" fill="none" stroke="#fff" strokeWidth="1.200"><path d="M1 6.500l5-5.500 5 5.500" /></svg>
      </Tray>
      <Tray $w={24}>
        <svg width="15" height="14" viewBox="0 0 15 14" fill="#fff"><path d="M3.700 0L0 2.500 3.700 5 7.500 2.500zM11.300 0L7.500 2.500 11.300 5 15 2.500zM0 7.500L3.700 10 7.500 7.500 3.700 5zM15 7.500L11.300 5 7.500 7.500 11.300 10zM3.800 11L7.500 13.500 11.200 11 7.500 8.500z" /></svg>
      </Tray>
      <Tray $w={24}>
        <svg width="16" height="15" viewBox="0 0 16 15" fill="none" stroke="#fff"><path d="M3.500 3V.5h12v10H6M.5 3.500h5v7h-5zM2 6h2M7 14.500h6M10 10.500v4" /></svg>
      </Tray>
      <Tray $w={24}>
        <svg width="16" height="14" viewBox="0 0 16 14" fill="none" stroke="#fff"><path d="M.5 4.500h3L7.500 1v12l-4-3.500h-3zM10 5c1 1 1 3 0 4M12 3c2 2 2 6 0 8M14 1.500c2.500 3 2.500 8 0 11" /></svg>
      </Tray>
      <Tray $w={34}><LangText>ไทย</LangText></Tray>
      <Clock><span>23:56</span><span>02/07/2019</span></Clock>
      <Tray $w={53} $pr={12}>
        <svg width="24" height="24" viewBox="0 0 24 24">
          <path d="M3 4h15v12H9l-3 3v-3H3z" fill="#fff" /><path d="M5 7h11M5 10h11M5 13h8" stroke="#05050a" />
          <circle cx="15" cy="16" r="7" fill="#3a3e44" stroke="#05050a" />
          <text x="15" y="20" textAnchor="middle" fontFamily="Noto Sans" fontSize="11" fill="#fff">1</text>
        </svg>
      </Tray>
    </Taskbar>
  </Window>
);

export default App;
